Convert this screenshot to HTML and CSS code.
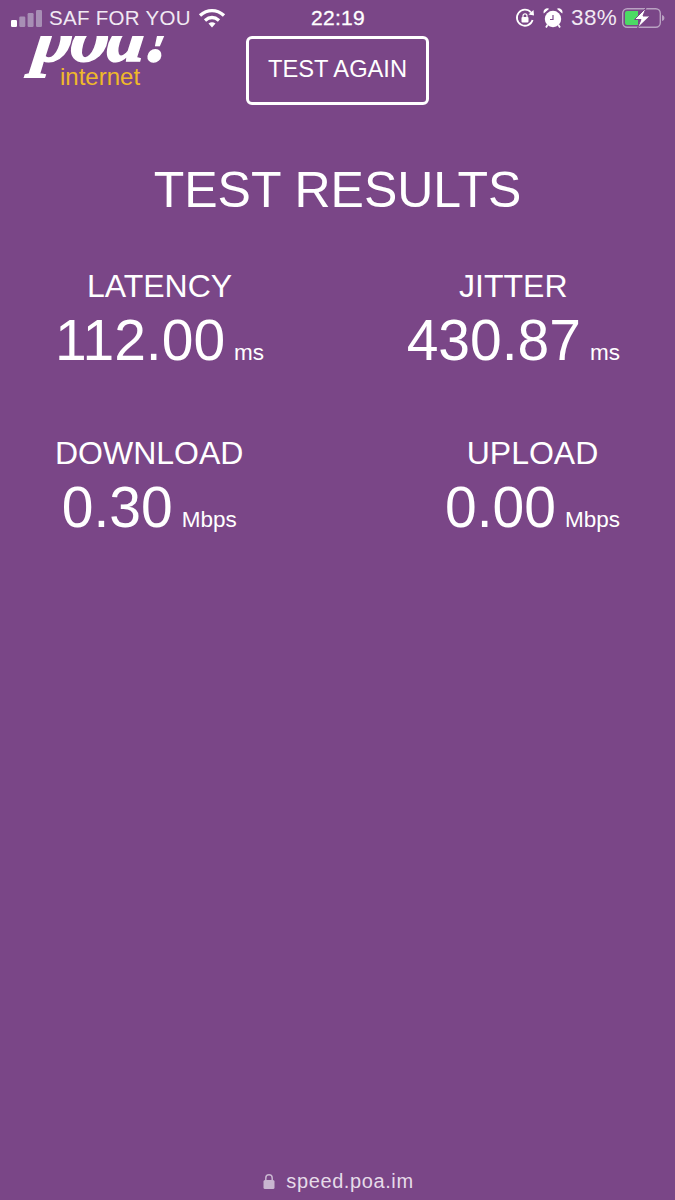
FILE: index.html
```html
<!DOCTYPE html>
<html lang="en">
<head>
<meta charset="utf-8">
<title>Speed test results</title>
<link rel="stylesheet" href="styles.css">
</head>
<body>
<div class="page">
  <div class="status">
    <div class="status-left">
      <svg class="signal" width="31" height="17" viewBox="0 0 31 17">
        <rect x="0" y="10" width="6" height="7" rx="1.200" fill="#fff"/>
        <rect x="8.300" y="6.500" width="6" height="10.500" rx="1.200" fill="#a88fb5"/>
        <rect x="16.600" y="3" width="6" height="14" rx="1.200" fill="#a88fb5"/>
        <rect x="25" y="0" width="6" height="17" rx="1.200" fill="#a88fb5"/>
      </svg>
      <span class="carrier">SAF FOR YOU</span>
      <svg class="wifi" width="28" height="20" viewBox="0 0 28 20">
        <path d="M2 7.500C9.500 1 18.500 1 26 7.500" fill="none" stroke="#fff" stroke-width="3.400"/>
        <path d="M7 12.500C11.500 8.700 16.500 8.700 21 12.500" fill="none" stroke="#fff" stroke-width="3.400"/>
        <path d="M10.500 15.600C12.800 13.700 15.200 13.700 17.500 15.600L14 19.500Z" fill="#fff"/>
      </svg>
    </div>
    <span class="clock">22:19</span>
    <div class="status-right">
      <svg class="lock-rot" width="20" height="20" viewBox="0 0 20 20">
        <path d="M17.600 12A8 8 0 1 1 16 4.500" fill="none" stroke="#fff" stroke-width="1.800"/>
        <path d="M13.500 6.500L19 7.500L18.500 2Z" fill="#fff"/>
        <rect x="6.500" y="9" width="7" height="5.500" rx="1" fill="#fff"/>
        <path d="M8 9.500V7.800a2 2 0 0 1 4 0V9.500" fill="none" stroke="#fff" stroke-width="1.200"/>
      </svg>
      <svg class="alarm" width="20" height="22" viewBox="0 0 20 22">
        <circle cx="10" cy="12" r="8.200" fill="#fff"/>
        <path d="M10 8V12.500H7" fill="none" stroke="#7a4687" stroke-width="1.200"/>
        <path d="M0.800 6.500A3.800 3.800 0 0 1 6.200 1.800ZM19.200 6.500A3.800 3.800 0 0 0 13.800 1.800Z" fill="#fff"/>
        <path d="M4.500 18L3 20.500M15.500 18L17 20.500" stroke="#fff" stroke-width="1.800"/>
      </svg>
      <span class="percent">38%</span>
      <svg class="battery" width="43" height="20" viewBox="0 0 43 20">
        <rect x="0.700" y="0.700" width="37.600" height="18.600" rx="4.500" fill="none" stroke="#b9a2c2" stroke-width="1.400"/>
        <path d="M3 5a2 2 0 0 1 2-2H16V17H5a2 2 0 0 1-2-2Z" fill="#4cd964"/>
        <path d="M40 7c1.600.5 2.400 1.500 2.400 3s-.8 2.500-2.400 3Z" fill="#b9a2c2"/>
        <path d="M24 0L12.500 11.500H19L15.500 20L28 8H21Z" fill="#fff" stroke="#7a4687" stroke-width="1"/>
      </svg>
    </div>
  </div>

  <header class="top">
    <div class="brand">
      <div class="brand-clip"><span class="brand-name">poa!</span></div>
      <span class="brand-sub">internet</span>
    </div>
    <button class="again" type="button">TEST AGAIN</button>
  </header>

  <main class="results">
    <h1 class="title">TEST RESULTS</h1>
    <div class="row row-first">
      <div class="metric">
        <div class="label">LATENCY</div>
        <div class="reading"><span class="value">112.00</span><span class="unit">ms</span></div>
      </div>
      <div class="metric">
        <div class="label">JITTER</div>
        <div class="reading"><span class="value">430.87</span><span class="unit">ms</span></div>
      </div>
    </div>
    <div class="row row-second">
      <div class="metric">
        <div class="label">DOWNLOAD</div>
        <div class="reading"><span class="value">0.30</span><span class="unit">Mbps</span></div>
      </div>
      <div class="metric">
        <div class="label">UPLOAD</div>
        <div class="reading"><span class="value">0.00</span><span class="unit">Mbps</span></div>
      </div>
    </div>
  </main>

  <footer class="url">
    <svg class="lock" width="12" height="15" viewBox="0 0 12 15">
      <rect x="0.500" y="6" width="11" height="9" rx="1.500" fill="#c9b6d0"/>
      <path d="M2.800 6.500V4a3.200 3.200 0 0 1 6.400 0V6.500" fill="none" stroke="#c9b6d0" stroke-width="1.500"/>
    </svg>
    <span class="host">speed.poa.im</span>
  </footer>
</div>
</body>
</html>
```

FILE: styles.css
```css
* { box-sizing: border-box; }
html, body { margin: 0; padding: 0; }
body {
  background: #7a4687;
  color: #fff;
  font-family: "Liberation Sans", Arial, sans-serif;
}
.page {
  height: 1200px;
  display: flex;
  flex-direction: column;
  overflow: hidden;
}
.status {
  height: 36px;
  flex: none;
  padding: 0 10px 0 11px;
  display: grid;
  grid-template-columns: 1fr auto 1fr;
  align-items: center;
  font-size: 20.500px;
  letter-spacing: 0.3px;
}
.status-left, .status-right {
  display: flex;
  align-items: center;
}
.status-right { justify-content: flex-end; gap: 8px; }
.carrier { margin-left: 7px; color: #f1e9f3; }
.wifi { margin-left: 7px; margin-top: -1px; }
.clock { -webkit-text-stroke: 0.3px #fff; font-size: 21px; }
.percent { color: #f1e9f3; font-size: 22.500px; }
.battery { margin-left: -3px; }
.top {
  height: 69px;
  flex: none;
  position: relative;
  display: flex;
  justify-content: center;
}
.brand {
  position: absolute;
  left: 8px;
  top: 0;
  width: 170px;
}
.brand-clip {
  height: 50px;
  padding-left: 28px;
  overflow: hidden;
}
.brand-name {
  display: inline-block;
  margin-top: -39px;
  font-family: "Liberation Serif", serif;
  font-style: italic;
  font-weight: 700;
  font-size: 76px;
  line-height: 76px;
  letter-spacing: -1.500px;
  color: #fff;
  -webkit-text-stroke: 1.500px #fff;
  transform: skewX(-8deg);
}
.brand-sub {
  position: absolute;
  left: 52px;
  top: 28px;
  font-size: 24px;
  color: #efb92a;
  line-height: 26px;
}
.again {
  width: 183px;
  height: 69px;
  border: 3px solid #fff;
  border-radius: 6px;
  background: transparent;
  color: #fff;
  font-family: inherit;
  font-size: 23.700px;
  padding: 0 0 3px;
}
.results { flex: 1; }
.title {
  margin: 55px 0 0;
  text-align: center;
  font-weight: 400;
  font-size: 50px;
  line-height: 60px;
}
.row {
  display: flex;
  justify-content: space-between;
  padding: 0 55px;
}
.row-first { margin-top: 48px; }
.row-second { margin-top: 62px; }
.metric { text-align: center; }
.label {
  font-size: 32px;
  line-height: 36px;
}
.reading {
  display: flex;
  align-items: baseline;
  justify-content: center;
  gap: 9px;
  margin-top: 3px;
}
.value { font-size: 57px; line-height: 66px; }
.unit { font-size: 22.500px; }
.url {
  flex: none;
  height: 38px;
  display: flex;
  align-items: center;
  justify-content: center;
  gap: 11px;
  padding-left: 2px;
  font-size: 20px;
  letter-spacing: 0.6px;
  color: #e6dbe9;
}
```
